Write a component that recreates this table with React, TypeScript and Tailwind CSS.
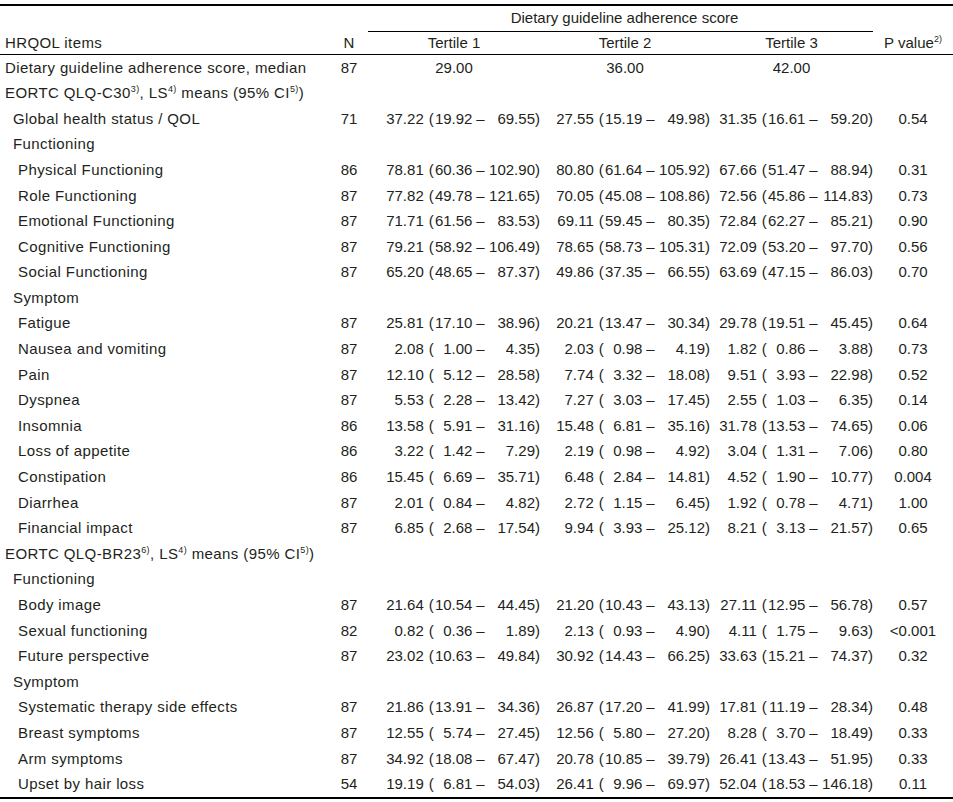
import React from "react";

type CI = [string, string, string];
type Row = {
  label: React.ReactNode;
  lvl: 0 | 1 | 2;
  n?: string;
  median?: [string, string, string];
  ci?: [CI, CI, CI];
  p?: string;
};

const grid = "grid grid-cols-[330px_38px_172px_170px_163px_80px]";
const indent = ["pl-[5px]", "pl-[13px]", "pl-[18px]"];
const ciOffset = ["ml-[16px]", "ml-[14px]", "ml-[7px]"];

const Sup = ({ children }: { children: React.ReactNode }) => (
  <sup className="text-[9px] -top-[0.7em]">{children}</sup>
);

const rows: Row[] = [
  { label: "Dietary guideline adherence score, median", lvl: 0, n: "87", median: ["29.00", "36.00", "42.00"] },
  {
    label: (
      <>
        EORTC QLQ-C30<Sup>3)</Sup>, LS<Sup>4)</Sup> means (95% CI<Sup>5)</Sup>)
      </>
    ),
    lvl: 0,
  },
  { label: "Global health status / QOL", lvl: 1, n: "71", ci: [["37.22", "19.92", "69.55"], ["27.55", "15.19", "49.98"], ["31.35", "16.61", "59.20"]], p: "0.54" },
  { label: "Functioning", lvl: 1 },
  { label: "Physical Functioning", lvl: 2, n: "86", ci: [["78.81", "60.36", "102.90"], ["80.80", "61.64", "105.92"], ["67.66", "51.47", "88.94"]], p: "0.31" },
  { label: "Role Functioning", lvl: 2, n: "87", ci: [["77.82", "49.78", "121.65"], ["70.05", "45.08", "108.86"], ["72.56", "45.86", "114.83"]], p: "0.73" },
  { label: "Emotional Functioning", lvl: 2, n: "87", ci: [["71.71", "61.56", "83.53"], ["69.11", "59.45", "80.35"], ["72.84", "62.27", "85.21"]], p: "0.90" },
  { label: "Cognitive Functioning", lvl: 2, n: "87", ci: [["79.21", "58.92", "106.49"], ["78.65", "58.73", "105.31"], ["72.09", "53.20", "97.70"]], p: "0.56" },
  { label: "Social Functioning", lvl: 2, n: "87", ci: [["65.20", "48.65", "87.37"], ["49.86", "37.35", "66.55"], ["63.69", "47.15", "86.03"]], p: "0.70" },
  { label: "Symptom", lvl: 1 },
  { label: "Fatigue", lvl: 2, n: "87", ci: [["25.81", "17.10", "38.96"], ["20.21", "13.47", "30.34"], ["29.78", "19.51", "45.45"]], p: "0.64" },
  { label: "Nausea and vomiting", lvl: 2, n: "87", ci: [["2.08", "1.00", "4.35"], ["2.03", "0.98", "4.19"], ["1.82", "0.86", "3.88"]], p: "0.73" },
  { label: "Pain", lvl: 2, n: "87", ci: [["12.10", "5.12", "28.58"], ["7.74", "3.32", "18.08"], ["9.51", "3.93", "22.98"]], p: "0.52" },
  { label: "Dyspnea", lvl: 2, n: "87", ci: [["5.53", "2.28", "13.42"], ["7.27", "3.03", "17.45"], ["2.55", "1.03", "6.35"]], p: "0.14" },
  { label: "Insomnia", lvl: 2, n: "86", ci: [["13.58", "5.91", "31.16"], ["15.48", "6.81", "35.16"], ["31.78", "13.53", "74.65"]], p: "0.06" },
  { label: "Loss of appetite", lvl: 2, n: "86", ci: [["3.22", "1.42", "7.29"], ["2.19", "0.98", "4.92"], ["3.04", "1.31", "7.06"]], p: "0.80" },
  { label: "Constipation", lvl: 2, n: "86", ci: [["15.45", "6.69", "35.71"], ["6.48", "2.84", "14.81"], ["4.52", "1.90", "10.77"]], p: "0.004" },
  { label: "Diarrhea", lvl: 2, n: "87", ci: [["2.01", "0.84", "4.82"], ["2.72", "1.15", "6.45"], ["1.92", "0.78", "4.71"]], p: "1.00" },
  { label: "Financial impact", lvl: 2, n: "87", ci: [["6.85", "2.68", "17.54"], ["9.94", "3.93", "25.12"], ["8.21", "3.13", "21.57"]], p: "0.65" },
  {
    label: (
      <>
        EORTC QLQ-BR23<Sup>6)</Sup>, LS<Sup>4)</Sup> means (95% CI<Sup>5)</Sup>)
      </>
    ),
    lvl: 0,
  },
  { label: "Functioning", lvl: 1 },
  { label: "Body image", lvl: 2, n: "87", ci: [["21.64", "10.54", "44.45"], ["21.20", "10.43", "43.13"], ["27.11", "12.95", "56.78"]], p: "0.57" },
  { label: "Sexual functioning", lvl: 2, n: "82", ci: [["0.82", "0.36", "1.89"], ["2.13", "0.93", "4.90"], ["4.11", "1.75", "9.63"]], p: "<0.001" },
  { label: "Future perspective", lvl: 2, n: "87", ci: [["23.02", "10.63", "49.84"], ["30.92", "14.43", "66.25"], ["33.63", "15.21", "74.37"]], p: "0.32" },
  { label: "Symptom", lvl: 1 },
  { label: "Systematic therapy side effects", lvl: 2, n: "87", ci: [["21.86", "13.91", "34.36"], ["26.87", "17.20", "41.99"], ["17.81", "11.19", "28.34"]], p: "0.48" },
  { label: "Breast symptoms", lvl: 2, n: "87", ci: [["12.55", "5.74", "27.45"], ["12.56", "5.80", "27.20"], ["8.28", "3.70", "18.49"]], p: "0.33" },
  { label: "Arm symptoms", lvl: 2, n: "87", ci: [["34.92", "18.08", "67.47"], ["20.78", "10.85", "39.79"], ["26.41", "13.43", "51.95"]], p: "0.33" },
  { label: "Upset by hair loss", lvl: 2, n: "54", ci: [["19.19", "6.81", "54.03"], ["26.41", "9.96", "69.97"], ["52.04", "18.53", "146.18"]], p: "0.11" },
];

function Interval({ v, i }: { v: CI; i: number }) {
  return (
    <div className={`flex ${ciOffset[i]}`}>
      <span className="w-[40px] flex justify-end">{v[0]}</span>
      <span className="ml-[5px] w-[44px] flex justify-between">
        <span>(</span>
        <span>{v[1]}</span>
      </span>
      <span className="w-[16px] text-center">–</span>
      <span className="w-[52px] flex justify-end">{v[2]})</span>
    </div>
  );
}

export default function App() {
  return (
    <div className="w-[953px] bg-white pt-[4px] text-[15px] text-[#231f20] font-['Liberation_Sans',Arial,sans-serif]">
      <div className="border-t-2 border-black">
        <div className={`${grid} h-[26px]`}>
          <div />
          <div />
          <div className="col-span-3 flex items-center justify-center border-b border-black pl-[8px]">
            Dietary guideline adherence score
          </div>
          <div />
        </div>
        <div className={`${grid} h-[23px] items-center border-b border-black`}>
          <div className="pl-[5px] tracking-[0.4px]">HRQOL items</div>
          <div className="text-center">N</div>
          <div className="text-center">Tertile 1</div>
          <div className="text-center">Tertile 2</div>
          <div className="text-center">Tertile 3</div>
          <div className="text-center">
            P value<Sup>2)</Sup>
          </div>
        </div>
      </div>
      <div className="border-b-2 border-black">
        {rows.map((r, k) => (
          <div key={k} className={`${grid} h-[25.6px] items-center whitespace-nowrap`}>
            <div className={`${indent[r.lvl]} tracking-[0.4px]`}>{r.label}</div>
            <div className="text-center">{r.n}</div>
            {r.median
              ? r.median.map((m, j) => (
                  <div key={j} className="text-center">
                    {m}
                  </div>
                ))
              : r.ci
              ? r.ci.map((c, j) => <Interval key={j} v={c} i={j} />)
              : [0, 1, 2].map((j) => <div key={j} />)}
            <div className="text-center">{r.p}</div>
          </div>
        ))}
      </div>
    </div>
  );
}
